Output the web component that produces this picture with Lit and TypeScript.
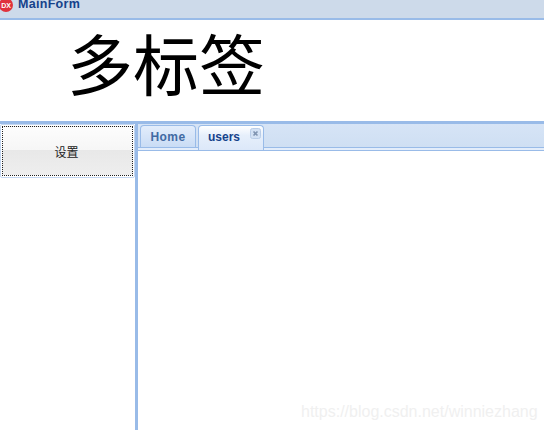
import { LitElement, html, css } from "lit";
import { customElement } from "lit/decorators.js";

@customElement("app-root")
export class AppRoot extends LitElement {
  static styles = css`
    :host { display: block; width: 544px; height: 430px; overflow: hidden; position: relative; background: #fff; font-family: "Liberation Sans", "Noto Sans CJK SC", sans-serif; }
    .title { height: 18px; background: #cddaea; border-bottom: 2px solid #99bbe8; display: flex; align-items: flex-start; overflow: hidden; }
    .logo { margin: -3px 0 0 -2px; flex: none; display: block; }
    .title-text { margin: -3px 0 0 4px; font-size: 12.5px; line-height: 15px; font-weight: 700; letter-spacing: 0.3px; font-family: "Liberation Sans", sans-serif; color: #15428b; }
    .head { height: 101px; background: #fff; display: flex; align-items: flex-start; }
    .big { margin: 6px 0 0 67px; font-size: 66px; line-height: 70px; color: #000; font-family: "Noto Sans CJK SC", sans-serif; font-weight: 400; }
    .main { height: 306px; border-top: 3px solid #99bbe8; display: flex; }
    .side { width: 135px; flex: none; }
    .btn { height: 54px; border: 1px solid #c5d8f2; border-radius: 2px; padding: 1px; box-sizing: border-box; }
    .btn-in { height: 100%; border: 1px dotted #222; box-sizing: border-box; padding-right: 2px; background: linear-gradient(#fdfdfd 0, #f6f6f6 48%, #e8e8e8 48%, #eeeeee 100%); display: flex; align-items: center; justify-content: center; font-size: 12px; color: #222; font-family: "Noto Sans CJK SC", sans-serif; }
    .split { width: 3px; flex: none; background: #99bbe8; }
    .content { flex: 1; display: flex; flex-direction: column; }
    .strip { height: 24px; box-sizing: border-box; background: linear-gradient(#d6e4f6, #cfdff3); border-bottom: 1px solid #99bbe8; display: flex; gap: 2px; padding: 1px 0 0 2px; align-items: flex-start; }
    .tab { box-sizing: border-box; border: 1px solid #99bbe8; border-bottom: none; border-radius: 4px 4px 0 0; display: flex; align-items: center; font-size: 12px; font-weight: 700; font-family: "Liberation Sans", sans-serif; position: relative; }
    .home { width: 56px; height: 22px; justify-content: center; letter-spacing: 0.4px; color: #416aa3; background: linear-gradient(#e3edfb, #c9dcf5); }
    .users { width: 66px; height: 25px; padding: 0 0 3px 9px; color: #15428b; background: linear-gradient(#ffffff 0, #e6effb 40%, #dce8f9 100%); }
    .close { position: absolute; right: 2px; top: 2px; width: 11px; height: 11px; display: block; }
    .band { height: 2px; background: #e3edfb; }
    .pane { flex: 1; background: #fff; border-top: 1px solid #99bbe8; }
    .mark { position: absolute; left: 301px; top: 402px; font-size: 16px; line-height: 20px; color: #f0f0f0; font-family: "Liberation Sans", sans-serif; white-space: nowrap; }
  `;
  render() {
    return html`
      <div class="title">
        <svg class="logo" width="16" height="16" viewBox="0 0 16 16">
          <circle cx="8" cy="8" r="7" fill="#e0323c" />
          <text x="8" y="10.5" font-size="7" font-weight="700" text-anchor="middle" fill="#fff" font-family="Liberation Sans">DX</text>
        </svg>
        <span class="title-text">MainForm</span>
      </div>
      <div class="head"><div class="big">多标签</div></div>
      <div class="main">
        <div class="side"><div class="btn"><div class="btn-in">设置</div></div></div>
        <div class="split"></div>
        <div class="content">
          <div class="strip">
            <div class="tab home">Home</div>
            <div class="tab users">users
              <svg class="close" viewBox="0 0 11 11">
                <rect x="0.5" y="0.5" width="10" height="10" rx="2" fill="#d3e1f4" stroke="#b9cde8" />
                <path d="M3.5 3.5l4 4M7.5 3.5l-4 4" stroke="#7f93b0" stroke-width="1.6" />
              </svg>
            </div>
          </div>
          <div class="band"></div>
          <div class="pane"></div>
        </div>
      </div>
      <div class="mark">https://blog.csdn.net/winniezhang</div>
    `;
  }
}
